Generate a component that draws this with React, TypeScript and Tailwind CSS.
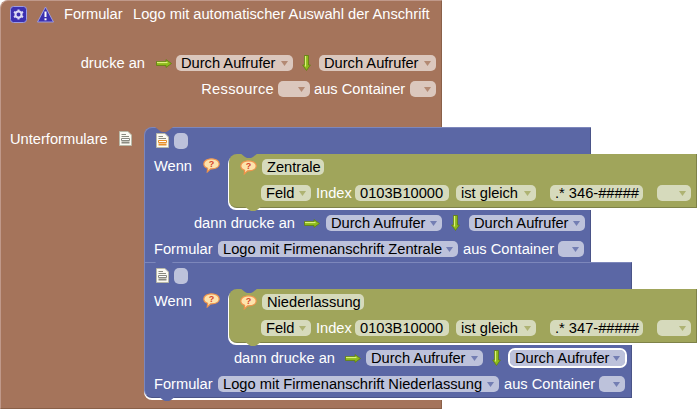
import React from "react";

type Tone = "brown" | "blue" | "olive";
const fieldBg: Record<Tone, string> = {
  brown: "bg-[#dbc7bd]",
  blue: "bg-[#bdc2db]",
  olive: "bg-[#d6dabc]",
};
const arrowFill: Record<Tone, string> = { brown: "#a5745b", blue: "#5b67a5", olive: "#a0a55b" };

function Pill({ tone, w, text, drop, sel }: { tone: Tone; w: number; text?: string; drop?: boolean; sel?: boolean }) {
  return (
    <div
      style={{ width: w }}
      className={`relative flex h-[16px] shrink-0 items-center rounded-[5px] pl-[5px] text-[14.67px] leading-[16px] text-black ${fieldBg[tone]} ${sel ? "outline-2 outline-white" : ""}`}
    >
      <span className="whitespace-pre">{text}</span>
      {drop && (
        <svg width="7" height="5" viewBox="0 0 7 5" className="absolute right-[5px] top-[6px]">
          <path d="M0 0H7L3.5 5Z" fill={arrowFill[tone]} opacity="0.75" />
        </svg>
      )}
    </div>
  );
}

function L({ children, className = "" }: { children: React.ReactNode; className?: string }) {
  return <span className={`shrink-0 whitespace-pre text-[14.67px] leading-[16px] text-white ${className}`}>{children}</span>;
}

function ArrowRight() {
  return (
    <svg width="16" height="9" viewBox="0 0 16 9" className="shrink-0">
      <path d="M0.5 2.5H10V0.6L15.5 4.5L10 8.4V6.5H0.5Z" fill="#8dbb1c" stroke="#5f7f10" strokeWidth="0.8" />
      <path d="M1 3.5H11.5" stroke="#dcf27a" strokeWidth="1.2" />
    </svg>
  );
}
function ArrowDown() {
  return (
    <svg width="9" height="16" viewBox="0 0 9 16" className="shrink-0">
      <path d="M2.5 0.5V10H0.6L4.5 15.5L8.4 10H6.5V0.5Z" fill="#8dbb1c" stroke="#5f7f10" strokeWidth="0.8" />
      <path d="M3.5 1V11.5" stroke="#dcf27a" strokeWidth="1.2" />
    </svg>
  );
}
function DocIcon() {
  return (
    <svg width="13" height="15" viewBox="0 0 13 15" className="shrink-0">
      <path d="M0.5 0.5H9L12.5 4V14.5H0.5Z" fill="#fbfaf2" stroke="#b9b9a8" />
      <path d="M2.5 3.5H7M2.5 5.5H10" stroke="#8a8a80" />
      <path d="M2.5 7.5H10.5V9.5H2.5Z" fill="#fff" stroke="#e8902a" />
      <path d="M2.5 11.5H10.5" stroke="#e8902a" strokeWidth="2" />
    </svg>
  );
}
function DocGray() {
  return (
    <svg width="13" height="15" viewBox="0 0 13 15" className="shrink-0">
      <path d="M0.5 0.5H9L12.5 4V14.5H0.5Z" fill="#fbfaf2" stroke="#b9b9a8" />
      <path d="M2.5 3.5H7M2.5 5.5H10" stroke="#8a8a80" />
      <path d="M2.5 7.5H10.5V9.5H2.5Z" fill="#fff" stroke="#8a8a80" />
      <path d="M2.5 11.5H10.5" stroke="#8a8a80" strokeWidth="2" />
    </svg>
  );
}
function Bubble() {
  return (
    <svg width="17" height="15" viewBox="0 0 17 15" className="shrink-0">
      <path
        d="M8.5 0.8C12.9 0.8 16.2 3 16.2 5.9C16.2 8.8 12.9 10.8 8.5 10.8L7.6 10.8L4.3 13.9L4.6 10.3C2.2 9.4 0.8 7.8 0.8 5.9C0.8 3 4.1 0.8 8.5 0.8Z"
        fill="#fde3ac"
        stroke="#f0934a"
        strokeWidth="1.2"
      />
      <text x="8.5" y="9" textAnchor="middle" fontSize="9" fontWeight="700" fontFamily="Liberation Sans" fill="#d6452a">?</text>
    </svg>
  );
}
function Gear() {
  return (
    <svg width="17" height="17" viewBox="0 0 17 17" className="shrink-0">
      <rect x="0.5" y="0.5" width="16" height="16" rx="3" fill="#3b30b0" stroke="#9c9ce0" />
      <circle cx="8.5" cy="8.5" r="3" fill="none" stroke="#dcdcf5" strokeWidth="2" />
      <path d="M8.5 3.4V5M8.5 12V13.6M4 5.9L5.5 6.8M11.5 10.2L13 11.1M4 11.1L5.5 10.2M11.5 6.8L13 5.9" stroke="#dcdcf5" strokeWidth="2" />
    </svg>
  );
}
function Warn() {
  return (
    <svg width="17" height="17" viewBox="0 0 17 17" className="shrink-0">
      <path d="M8.5 1L16.5 16H0.5Z" fill="#3b30b0" stroke="#9c9ce0" strokeLinejoin="round" />
      <path d="M8.5 5.5V11" stroke="#fff" strokeWidth="2" />
      <path d="M8.5 12.3V14.3" stroke="#fff" strokeWidth="2" />
    </svg>
  );
}

function NotchTop({ color, left }: { color: string; left: number }) {
  return (
    <svg width="18" height="6" viewBox="0 0 18 6" style={{ left }} className="absolute top-[-1px]">
      <path d="M0 0L5 4L7 5H11L13 4L18 0Z" fill={color} />
    </svg>
  );
}
function NotchBottom({ color, left }: { color: string; left: number }) {
  return (
    <svg width="18" height="6" viewBox="0 0 18 6" style={{ left }} className="absolute bottom-[-5px]">
      <path d="M0 0L5 4L7 5H11L13 4L18 0Z" fill={color} />
    </svg>
  );
}

function Olive({ title, titleW, pat }: { title: string; titleW: number; pat: string }) {
  return (
    <div className="relative ml-[9px] mt-[1px] flex h-[54px] w-[468px] shrink-0 flex-col rounded-l-[8px] border-r border-b-[1px] border-b-[#7e8248] border-r-[#7e8248] bg-[#a0a55b] pl-[11px] shadow-[-1px_2px_0_#ffffff]">
      <NotchTop color="#5b67a5" left={11} />
      <NotchBottom color="#a0a55b" left={15} />
      <div className="mt-[5px] flex h-[16px] items-center gap-[5px]">
        <Bubble />
        <Pill tone="olive" w={titleW} text={title} />
      </div>
      <div className="ml-[21px] mt-[10px] flex h-[16px] items-center">
        <Pill tone="olive" w={50} text="Feld" drop />
        <L className="ml-[5px] w-[35px]">Index</L>
        <div className="ml-[4px]"><Pill tone="olive" w={94} text="0103B10000" /></div>
        <div className="ml-[7px]"><Pill tone="olive" w={80} text="ist gleich" drop /></div>
        <div className="ml-[14px]"><Pill tone="olive" w={93} text={pat} /></div>
        <div className="ml-[14px]"><Pill tone="olive" w={34} drop /></div>
      </div>
    </div>
  );
}

function BlueBlock({
  w, title, titleW, pat, logo, logoW, icon, last,
}: {
  w: number; title: string; titleW: number; pat: string; logo: string; logoW: number; icon: React.ReactNode; last?: boolean;
}) {
  return (
    <div className={`relative flex flex-col border-t border-r border-l border-t-[#7d87bb] border-l-[#7d87bb] border-r-[#4a5488] bg-[#5b67a5] pl-[9px] pr-[5px] ${last ? "h-[136px] rounded-bl-[8px] border-b border-b-[#4a5488] shadow-[0_2px_0_#ffffff]" : "h-[135px] rounded-tl-[8px]"}`} style={{ width: w }}>
      {!last ? <NotchTop color="#a5745b" left={10} /> : <NotchTop color="#5b67a5" left={10} />}
      {last && <NotchBottom color="#5b67a5" left={13} />}
      <div className="mt-[4px] flex h-[17px] items-center gap-[5px] pl-[2px]">
        {icon}
        <div className="h-[16px] w-[14px] rounded-[5px] bg-[#bdc2db]" />
      </div>
      <div className="mt-[4px] flex h-[57px]">
        <L className="mt-[5px] w-[40px]">Wenn</L>
        <div className="ml-[9px] mt-[5px]"><Bubble /></div>
        <Olive title={title} titleW={titleW} pat={pat} />
      </div>
      {last ? (
        <div className="flex h-[26px] items-center justify-end">
          <L>dann drucke an</L>
          <div className="ml-[10px]"><ArrowRight /></div>
          <div className="ml-[5px]"><Pill tone="blue" w={117} text="Durch Aufrufer" drop /></div>
          <div className="mx-[9px]"><ArrowDown /></div>
          <div className="mr-[1px]"><Pill tone="blue" w={115} text="Durch Aufrufer" drop sel /></div>
        </div>
      ) : (
        <div className="flex h-[26px] items-center justify-end">
          <L>dann drucke an</L>
          <div className="ml-[9px]"><ArrowRight /></div>
          <div className="ml-[6px]"><Pill tone="blue" w={116} text="Durch Aufrufer" drop /></div>
          <div className="mx-[9px]"><ArrowDown /></div>
          <Pill tone="blue" w={116} text="Durch Aufrufer" drop />
        </div>
      )}
      <div className="flex h-[26px] items-center">
        <L className="w-[59px]">Formular</L>
        <div className="ml-[5px]"><Pill tone="blue" w={logoW} text={logo} drop /></div>
        <L className="ml-[5px]">aus Container</L>
        <div className="ml-[4px]"><Pill tone="blue" w={26} drop /></div>
      </div>
    </div>
  );
}

export default function App() {
  return (
    <div className="h-[410px] w-[697px] overflow-hidden bg-white font-['Liberation_Sans',sans-serif]">
      <div className="relative flex h-[409px] w-[442px] flex-col rounded-tl-[8px] border border-l-[#c0998a] border-r-[#8a6048] border-b-[#8a6048] border-t-[#c0998a] bg-[#a5745b]">
        <div className="flex h-[26px] items-center pl-[9px] pt-[1px]">
          <Gear />
          <div className="ml-[10px]"><Warn /></div>
          <L className="mb-[2px] ml-[10px] w-[59px]">Formular</L>
          <L className="mb-[2px] ml-[10px]">Logo mit automatischer Auswahl der Anschrift</L>
        </div>
        <div className="mt-[23px] flex h-[26px] items-center justify-end pr-[5px]">
          <L>drucke an</L>
          <div className="ml-[11px]"><ArrowRight /></div>
          <div className="ml-[4px]"><Pill tone="brown" w={117} text="Durch Aufrufer" drop /></div>
          <div className="ml-[9px] mr-[8px]"><ArrowDown /></div>
          <Pill tone="brown" w={117} text="Durch Aufrufer" drop />
        </div>
        <div className="flex h-[26px] items-center justify-end pr-[5px]">
          <L className="tracking-[0.3px]">Ressource</L>
          <div className="ml-[4px]"><Pill tone="brown" w={32} drop /></div>
          <L className="ml-[4px] w-[92px]">aus Container</L>
          <div className="ml-[4px]"><Pill tone="brown" w={26} drop /></div>
        </div>
        <div className="mt-[25px] flex">
          <L className="ml-[9px] mt-[4px] w-[97px]">Unterformulare</L>
          <div className="ml-[12px] mt-[4px]"><DocGray /></div>
          <div className="ml-[12px] flex flex-col">
            <BlueBlock w={447} title="Zentrale" titleW={62} pat=".* 346-#####" logo="Logo mit Firmenanschrift Zentrale" logoW={240} icon={<DocIcon />} />
            <BlueBlock w={488} title="Niederlassung" titleW={102} pat=".* 347-#####" logo="Logo mit Firmenanschrift Niederlassung" logoW={281} icon={<DocGray />} last />
          </div>
        </div>
      </div>
    </div>
  );
}
